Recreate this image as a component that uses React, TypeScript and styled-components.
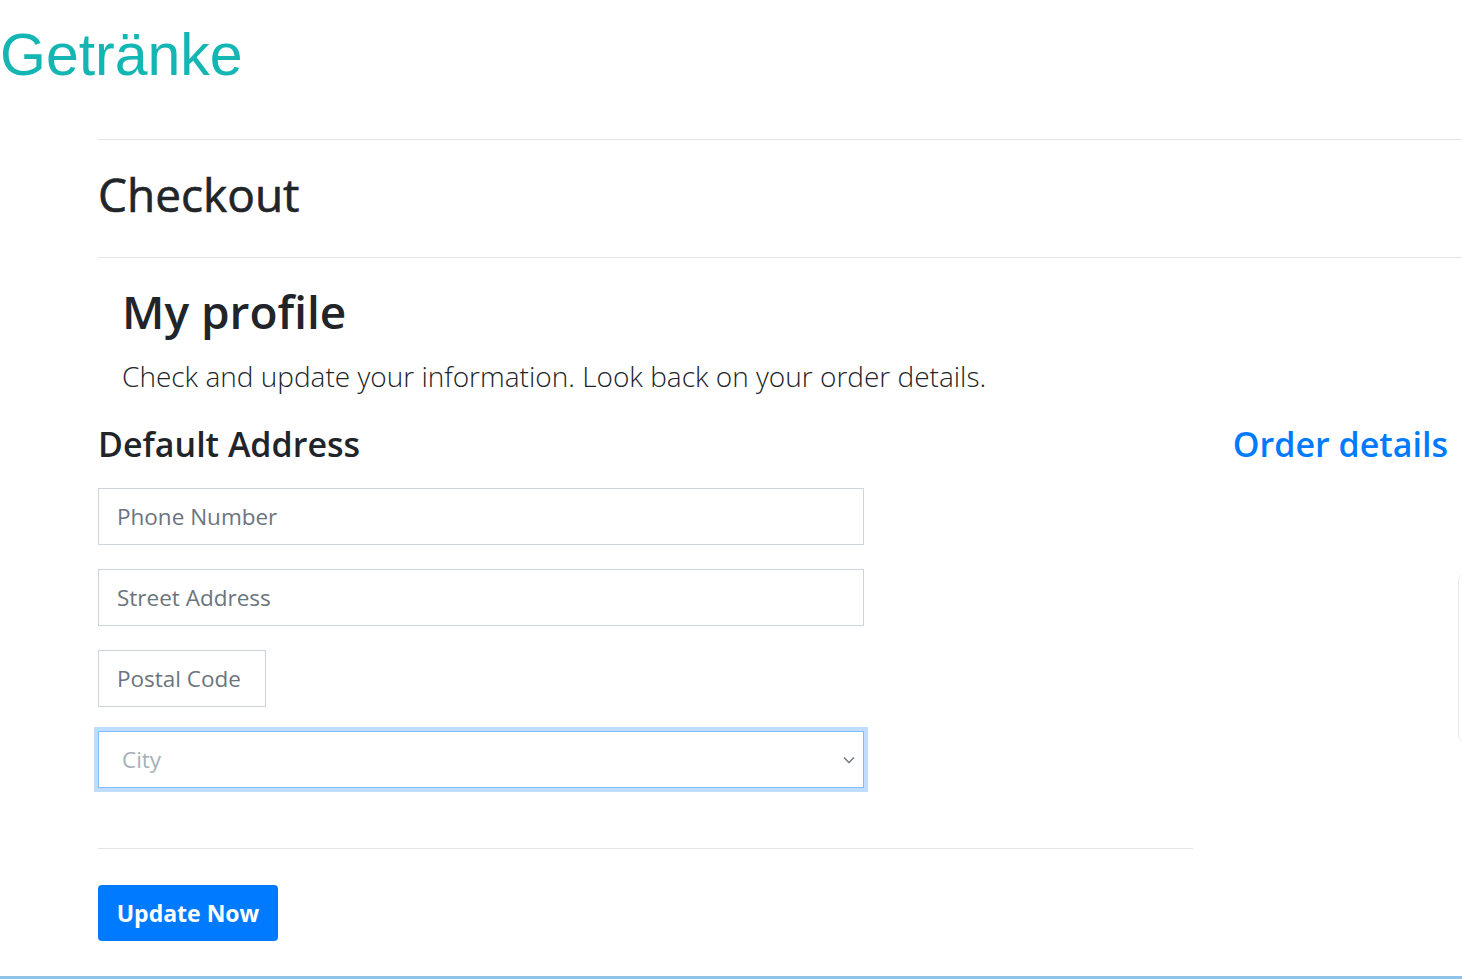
import React from 'react'
import styled, { createGlobalStyle } from 'styled-components'

const dark = '#212529'
const blue = '#007bff'
const teal = '#13b6b3'
const rule = '#e5e5e5'
const inputBorder = '#ced4da'
const muted = '#6c757d'

const GlobalStyle = createGlobalStyle`
  html, body {
    margin: 0;
    padding: 0;
    background: #ffffff;
  }
  body {
    font-family: 'Open Sans', 'Noto Sans', sans-serif;
    color: ${dark};
    overflow: hidden;
  }
  * {
    box-sizing: border-box;
  }
`

const Page = styled.div`
  width: 1462px;
  height: 979px;
  overflow: hidden;
  display: flex;
  flex-direction: column;
  border-bottom: 3px solid #8fc4ea;
`

const Brand = styled.h1`
  margin: 0;
  padding-top: 22px;
  font-family: 'Liberation Sans', Arial, sans-serif;
  font-weight: 400;
  font-size: 59px;
  line-height: 66px;
  color: ${teal};
  height: 139px;
`

const Main = styled.main`
  margin-left: 98px;
  display: flex;
  flex-direction: column;
`

const TitleBar = styled.div`
  height: 119px;
  padding-bottom: 8px;
  border-top: 1px solid ${rule};
  border-bottom: 1px solid ${rule};
  display: flex;
  align-items: center;
`

const PageTitle = styled.h2`
  margin: 0;
  font-size: 46px;
  font-weight: 500;
  line-height: 1.2;
  -webkit-text-stroke: 0.6px ${dark};
`

const Intro = styled.section`
  padding: 26px 0 0 24px;
`

const ProfileTitle = styled.h2`
  margin: 0;
  font-size: 46px;
  font-weight: 600;
  line-height: 1.2;
`

const Lead = styled.p`
  margin: 16px 0 0;
  font-size: 28px;
  font-weight: 300;
  line-height: 1.5;
`

const Row = styled.div`
  display: grid;
  grid-template-columns: 1095px 1fr;
  margin-top: 27px;
`

const FormCol = styled.div`
  display: flex;
  flex-direction: column;
`

const SideCol = styled.div`
  display: flex;
  flex-direction: column;
  align-items: flex-end;
  padding-right: 14px;
`

const SectionTitle = styled.h3<{ accent?: boolean }>`
  margin: 0;
  font-size: 34px;
  font-weight: 600;
  line-height: 1.2;
  color: ${({ accent }) => (accent ? blue : dark)};
`

const Fields = styled.div`
  display: flex;
  flex-direction: column;
  align-items: flex-start;
  gap: 24px;
  margin-top: 23px;
`

const Input = styled.input<{ narrow?: boolean }>`
  width: ${({ narrow }) => (narrow ? '168px' : '766px')};
  height: 57px;
  padding: 0 18px;
  border: 1px solid ${inputBorder};
  border-radius: 0;
  font-family: inherit;
  font-size: 22.5px;
  color: ${dark};
  outline: none;

  &::placeholder {
    color: ${muted};
  }
`

const SelectWrap = styled.div`
  position: relative;
  width: 766px;
  height: 57px;
  border: 1px solid #80bdff;
  box-shadow: 0 0 0 4px rgba(0, 123, 255, 0.25);

  & > svg {
    position: absolute;
    right: 8px;
    top: 24px;
    pointer-events: none;
  }
`

const Select = styled.select`
  width: 100%;
  height: 100%;
  appearance: none;
  border: none;
  outline: none;
  background: transparent;
  padding: 0 23px;
  font-family: inherit;
  font-size: 22.5px;
  color: #a7b0b9;
`

const Divider = styled.hr`
  margin: 60px 0 0;
  border: 0;
  border-top: 1px solid ${rule};
`

const Button = styled.button`
  margin-top: 36px;
  width: 180px;
  height: 56px;
  border: none;
  border-radius: 4px;
  background: ${blue};
  color: #ffffff;
  font-family: inherit;
  font-size: 23px;
  font-weight: 700;
  cursor: pointer;
`

const GhostCard = styled.div`
  margin-top: 108px;
  margin-right: -320px;
  width: 310px;
  height: 170px;
  border: 1px solid #e9e9e9;
  border-radius: 8px;
`

const App: React.FunctionComponent = () => {
  return (
    <Page>
      <GlobalStyle />
      <Brand>Getränke</Brand>
      <Main>
        <TitleBar>
          <PageTitle>Checkout</PageTitle>
        </TitleBar>
        <Intro>
          <ProfileTitle>My profile</ProfileTitle>
          <Lead>Check and update your information. Look back on your order details.</Lead>
        </Intro>
        <Row>
          <FormCol>
            <SectionTitle>Default Address</SectionTitle>
            <Fields>
              <Input placeholder={'Phone Number'} />
              <Input placeholder={'Street Address'} />
              <Input narrow placeholder={'Postal Code'} />
              <SelectWrap>
                <Select defaultValue={''}>
                  <option value={''} disabled>
                    City
                  </option>
                </Select>
                <svg width="12" height="8" viewBox="0 0 12 8">
                  <path d="M1 1.5l5 5 5-5" fill="none" stroke="#6c757d" strokeWidth="1.3" />
                </svg>
              </SelectWrap>
            </Fields>
            <Divider />
            <div>
              <Button>Update Now</Button>
            </div>
          </FormCol>
          <SideCol>
            <SectionTitle accent>Order details</SectionTitle>
            <GhostCard />
          </SideCol>
        </Row>
      </Main>
    </Page>
  )
}

export default App
